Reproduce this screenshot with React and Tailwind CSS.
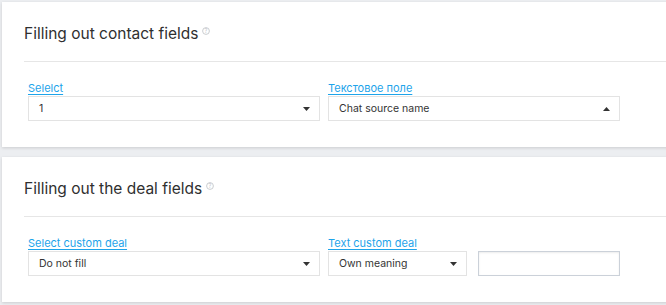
import React from 'react';

function InfoIcon() {
  return (
    <svg width="8" height="8" viewBox="0 0 8 8" className="ml-[4px] mt-[5px] shrink-0">
      <circle cx="4" cy="4" r="3.4" fill="none" stroke="#c4c7cc" strokeWidth="0.9" />
      <text x="4" y="5.9" textAnchor="middle" fontSize="5.5" fill="#c4c7cc" fontFamily="Inter, sans-serif">?</text>
    </svg>
  );
}

function Caret({ up }) {
  return (
    <svg width="7" height="4" viewBox="0 0 7 4" className="shrink-0">
      {up ? <path d="M0 4 L3.5 0 L7 4 Z" fill="#333" /> : <path d="M0 0 L7 0 L3.5 4 Z" fill="#333" />}
    </svg>
  );
}

function FakeSelect({ value, up, width }) {
  return (
    <div className={`${width} h-[25px] border border-[#e3e3e3] bg-white flex items-center justify-between pl-[10px] pr-[9px] text-[10.5px] text-[#333]`}>
      <span>{value}</span>
      <Caret up={up} />
    </div>
  );
}

function Label({ children }) {
  return (
    <div className="text-[11px] leading-[14px] mb-[1px] text-[#1ea4ea] underline underline-offset-[2px]">
      {children}
    </div>
  );
}

function Card({ title, children, className }) {
  return (
    <div className={`w-[700px] bg-white shadow-[0_1px_3px_rgba(0,0,0,0.14)] pt-[20px] pb-[26px] ${className}`}>
      <div className="flex items-start pl-[22px] h-[24px]">
        <h2 className="text-[15.5px] leading-[24px] text-[#2f2f2f]">{title}</h2>
        <InfoIcon />
      </div>
      <div className="ml-[22px] mt-[15px] h-[1px] bg-[#e6e6e6]" />
      <div className="pt-[19px] pl-[26px] flex gap-[8px]">{children}</div>
    </div>
  );
}

export default function App() {
  return (
    <div className="w-[666px] h-[305px] overflow-hidden bg-[#eceef1] pt-[2px] pl-[2px]" style={{ fontFamily: 'Inter, "Noto Sans", sans-serif' }}>
      <Card title="Filling out contact fields">
        <div>
          <Label>Selelct</Label>
          <FakeSelect value="1" width="w-[292px]" />
        </div>
        <div>
          <Label>Текстовое поле</Label>
          <FakeSelect value="Chat source name" up width="w-[292px]" />
        </div>
      </Card>
      <Card title="Filling out the deal fields" className="mt-[10px]">
        <div>
          <Label>Select custom deal</Label>
          <FakeSelect value="Do not fill" width="w-[292px]" />
        </div>
        <div>
          <Label>Text custom deal</Label>
          <div className="flex gap-[11px]">
            <FakeSelect value="Own meaning" width="w-[139px]" />
            <input
              type="text"
              className="w-[142px] h-[25px] border border-[#cbd1d9] bg-white shadow-[inset_0_1px_2px_rgba(0,0,0,0.08)] outline-none"
            />
          </div>
        </div>
      </Card>
    </div>
  );
}
